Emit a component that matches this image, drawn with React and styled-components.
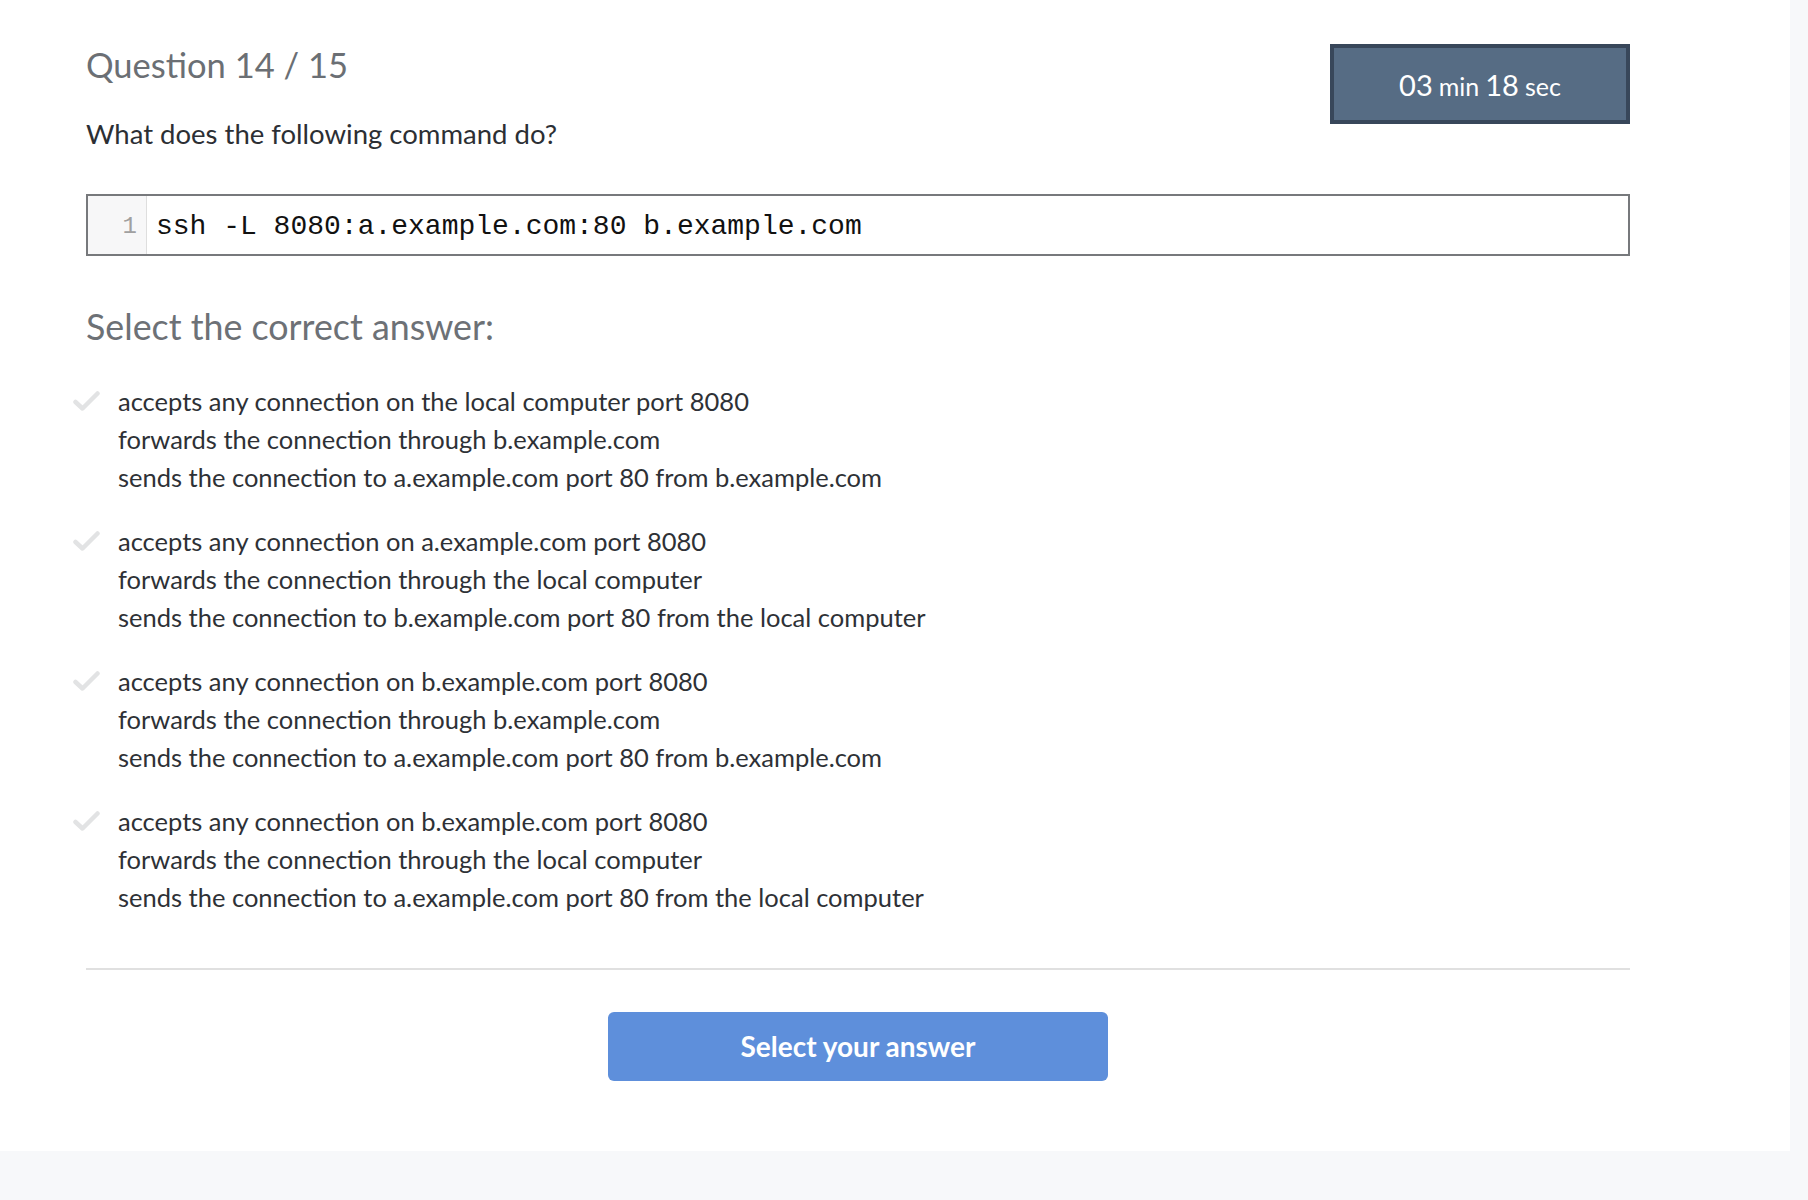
import React from "react";
import styled, { createGlobalStyle } from "styled-components";

const Global = createGlobalStyle`
  html, body { margin: 0; padding: 0; background: #f7f8fa; }
  body { font-family: Lato, "Open Sans", sans-serif; }
  * { box-sizing: border-box; }
`;

const Page = styled.div`
  width: 1808px;
  min-height: 1200px;
  background: #f7f8fa;
`;

const Panel = styled.main`
  width: 1790px;
  background: #ffffff;
  padding: 44px 160px 70px 86px;
`;

const Header = styled.header`
  display: flex;
  justify-content: space-between;
  align-items: flex-start;
`;

const TitleBlock = styled.div`
  display: flex;
  flex-direction: column;
`;

const Title = styled.h1`
  margin: 1px 0 0;
  font-size: 34.5px;
  line-height: 40px;
  font-weight: 400;
  color: #6b6f74;
`;

const Prompt = styled.p`
  margin: 31px 0 0;
  font-size: 27.5px;
  line-height: 36px;
  color: #2c2f34;
`;

const Timer = styled.div`
  width: 300px;
  height: 80px;
  background: #566c84;
  border: 4px solid #38475a;
  color: #ffffff;
  display: flex;
  justify-content: center;
  align-items: baseline;
  gap: 6px;
  padding-top: 20px;
`;

const TimerNum = styled.span`
  font-size: 29px;
  line-height: 34px;
`;

const TimerUnit = styled.span`
  font-size: 25px;
  line-height: 34px;
`;

const CodeBox = styled.div`
  margin-top: 42px;
  height: 62px;
  border: 2px solid #77797c;
  display: flex;
  align-items: stretch;
`;

const Gutter = styled.div`
  width: 59px;
  background: #f7f7f8;
  border-right: 1px solid #dedede;
  color: #a0a0a0;
  font-family: "Liberation Mono", "Courier New", monospace;
  font-size: 24px;
  display: flex;
  align-items: center;
  justify-content: flex-end;
  padding: 3px 9px 0 0;
`;

const Code = styled.code`
  font-family: "Liberation Mono", "Courier New", monospace;
  font-size: 28px;
  color: #111;
  display: flex;
  align-items: center;
  padding: 3px 0 0 9px;
  white-space: pre;
`;

const SectionTitle = styled.h2`
  margin: 49px 0 0;
  font-size: 35.8px;
  line-height: 44px;
  font-weight: 400;
  color: #6d7176;
`;

const Options = styled.ul`
  list-style: none;
  margin: 33px 0 0 -13px;
  padding: 0;
  display: flex;
  flex-direction: column;
  gap: 26px;
`;

const Option = styled.li`
  display: grid;
  grid-template-columns: 45px 1fr;
  align-items: start;
  cursor: pointer;
`;

const CheckWrap = styled.span`
  display: flex;
  height: 38px;
  align-items: center;
`;

const Lines = styled.div`
  display: flex;
  flex-direction: column;
`;

const Line = styled.span`
  font-size: 25.5px;
  line-height: 38px;
  color: #2e3136;
`;

const Divider = styled.hr`
  margin: 51.5px 0 0;
  border: none;
  border-top: 2px solid #e0e0e0;
`;

const Footer = styled.div`
  display: flex;
  padding-left: 522px;
  margin-top: 42px;
`;

const Submit = styled.button`
  width: 500px;
  height: 69px;
  border: none;
  border-radius: 6px;
  background: #5e8fdb;
  color: #ffffff;
  font-family: Lato, "Open Sans", sans-serif;
  font-size: 28px;
  font-weight: 700;
  cursor: pointer;
`;

const Check = () => (
  <svg width="27" height="21" viewBox="0 0 27 21" fill="none">
    <path d="M2.5 11 L9.5 17.5 L24.5 2.5" stroke="#e2e3e4" strokeWidth="4.5" strokeLinecap="round" strokeLinejoin="round" />
  </svg>
);

const answers = [
  [
    "accepts any connection on the local computer port 8080",
    "forwards the connection through b.example.com",
    "sends the connection to a.example.com port 80 from b.example.com",
  ],
  [
    "accepts any connection on a.example.com port 8080",
    "forwards the connection through the local computer",
    "sends the connection to b.example.com port 80 from the local computer",
  ],
  [
    "accepts any connection on b.example.com port 8080",
    "forwards the connection through b.example.com",
    "sends the connection to a.example.com port 80 from b.example.com",
  ],
  [
    "accepts any connection on b.example.com port 8080",
    "forwards the connection through the local computer",
    "sends the connection to a.example.com port 80 from the local computer",
  ],
];

export default function App() {
  return (
    <Page>
      <Global />
      <Panel>
        <Header>
          <TitleBlock>
            <Title>Question 14 / 15</Title>
            <Prompt>What does the following command do?</Prompt>
          </TitleBlock>
          <Timer>
            <TimerNum>03</TimerNum>
            <TimerUnit>min</TimerUnit>
            <TimerNum>18</TimerNum>
            <TimerUnit>sec</TimerUnit>
          </Timer>
        </Header>
        <CodeBox>
          <Gutter>1</Gutter>
          <Code>ssh -L 8080:a.example.com:80 b.example.com</Code>
        </CodeBox>
        <SectionTitle>Select the correct answer:</SectionTitle>
        <Options>
          {answers.map((lines, i) => (
            <Option key={i}>
              <CheckWrap>
                <Check />
              </CheckWrap>
              <Lines>
                {lines.map((l, j) => (
                  <Line key={j}>{l}</Line>
                ))}
              </Lines>
            </Option>
          ))}
        </Options>
        <Divider />
        <Footer>
          <Submit>Select your answer</Submit>
        </Footer>
      </Panel>
    </Page>
  );
}
